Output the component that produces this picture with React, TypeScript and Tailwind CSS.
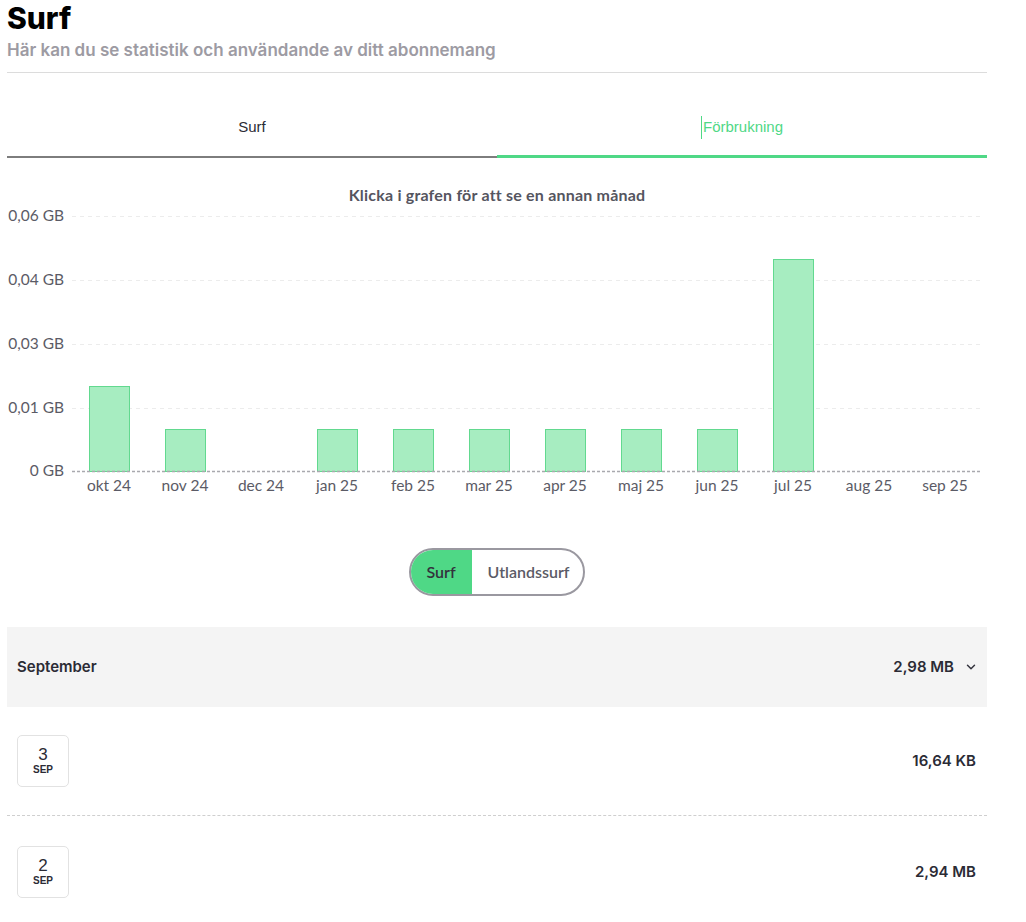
import React from "react";
import { ChevronDown } from "lucide-react";

const months = [
  { label: "okt 24", top: 181 },
  { label: "nov 24", top: 224 },
  { label: "dec 24", top: null },
  { label: "jan 25", top: 224 },
  { label: "feb 25", top: 224 },
  { label: "mar 25", top: 224 },
  { label: "apr 25", top: 224 },
  { label: "maj 25", top: 224 },
  { label: "jun 25", top: 224 },
  { label: "jul 25", top: 54 },
  { label: "aug 25", top: null },
  { label: "sep 25", top: null },
];

const ticks = [
  { label: "0,06 GB", y: 11 },
  { label: "0,04 GB", y: 75 },
  { label: "0,03 GB", y: 139 },
  { label: "0,01 GB", y: 203 },
];

const BASE = 266;

function UsageChart() {
  return (
    <svg width={980} height={300} className="block" style={{ fontFamily: "Lato, 'Noto Sans', sans-serif" }}>
      {ticks.map((t) => (
        <g key={t.label}>
          <line x1={65} x2={975} y1={t.y + 0.5} y2={t.y + 0.5} stroke="#ececec" strokeDasharray="4 4" />
          <text x={57} y={t.y + 5} textAnchor="end" fontSize={15.5} fill="#5b5b66">
            {t.label}
          </text>
        </g>
      ))}
      {months.map((m, i) => {
        const cx = 102 + 76 * i;
        return (
          <g key={m.label}>
            {m.top !== null && (
              <rect
                x={cx - 20 + 0.5}
                y={m.top + 0.5}
                width={40}
                height={BASE - m.top}
                fill="#a7edc1"
                stroke="#62d98f"
                strokeWidth={1}
              />
            )}
            <text x={cx} y={BASE + 20} textAnchor="middle" fontSize={15.5} fill="#5b5b66">
              {m.label}
            </text>
          </g>
        );
      })}
      <line x1={65} x2={975} y1={BASE + 0.5} y2={BASE + 0.5} stroke="#a9a9ae" strokeWidth={1.5} strokeDasharray="3 2" />
      <text x={57} y={BASE + 5} textAnchor="end" fontSize={15.5} fill="#5b5b66">
        0 GB
      </text>
    </svg>
  );
}

function DayRow({ day, amount, last }: { day: string; amount: string; last?: boolean }) {
  return (
    <div
      className={`flex items-center justify-between pl-[10px] pr-[11px] ${
        last ? "pt-[30px] pb-[28px]" : "pt-[28px] pb-[28px] border-b border-dashed border-[#cfcfcf]"
      }`}
    >
      <div className="flex h-[52px] w-[52px] flex-col items-center justify-center rounded-[5px] border border-[#e2e2e2]">
        <span className="text-[17px] leading-[18px] text-[#2b2b35]">{day}</span>
        <span className="text-[10px] font-bold leading-[12px] text-[#2b2b35]">SEP</span>
      </div>
      <span className="text-[15px] font-semibold text-[#2b2b35]" style={{ fontFamily: "Inter, sans-serif" }}>
        {amount}
      </span>
    </div>
  );
}

export default function App() {
  return (
    <div className="min-h-screen bg-white" style={{ fontFamily: "'Liberation Sans', Arial, sans-serif" }}>
      <div className="ml-[7px] w-[980px]">
        <h1 className="pt-[1px] text-[30px] font-extrabold leading-[34px] text-black" style={{ fontFamily: "Inter, sans-serif" }}>
          Surf
        </h1>
        <p className="mt-[5px] text-[17px] font-semibold leading-[20px] text-[#9d9ba3]" style={{ fontFamily: "Inter, sans-serif" }}>
          Här kan du se statistik och användande av ditt abonnemang
        </p>
        <div className="mt-[12px] h-px bg-[#dcdcdc]" />

        <div className="mt-[25px] flex">
          <div className="flex h-[60px] flex-1 items-center justify-center border-b-2 border-[#7d7d7d] text-[15px] text-[#2b2b35]">
            Surf
          </div>
          <div className="flex h-[60px] flex-1 items-center justify-center border-b-[3px] border-[#4fd886] pt-[1px] text-[15px] text-[#4fd886]">
            <span className="mr-[1px] h-[23px] w-px bg-[#4fd886]" />
            Förbrukning
          </div>
        </div>

        <p className="mt-[27px] text-center text-[16px] font-bold leading-[20px] tracking-[0.2px] text-[#55555f]" style={{ fontFamily: "Lato, sans-serif" }}>
          Klicka i grafen för att se en annan månad
        </p>
        <UsageChart />

        <div className="mt-[43px] flex justify-center">
          <div className="flex h-[48px] overflow-hidden rounded-full border-2 border-[#9a98a0] text-[16px] font-semibold" style={{ fontFamily: "Lato, sans-serif" }}>
            <div className="-my-[2px] -ml-[2px] flex items-center bg-[#4fd886] pl-[17px] pr-[16px] text-[#33333d]">Surf</div>
            <div className="flex items-center pl-[16px] pr-[13px] text-[#5b5b66]">Utlandssurf</div>
          </div>
        </div>

        <div
          className="mt-[31px] flex h-[80px] items-center justify-between bg-[#f4f4f4] pl-[10px] pr-[9px] text-[15px] font-semibold text-[#2b2b35]"
          style={{ fontFamily: "Inter, sans-serif" }}
        >
          <span>September</span>
          <span className="flex items-center gap-[10px]">
            2,98 MB
            <ChevronDown size={14} strokeWidth={2.5} className="text-[#33333d]" />
          </span>
        </div>

        <DayRow day="3" amount="16,64 KB" />
        <DayRow day="2" amount="2,94 MB" last />
      </div>
    </div>
  );
}
